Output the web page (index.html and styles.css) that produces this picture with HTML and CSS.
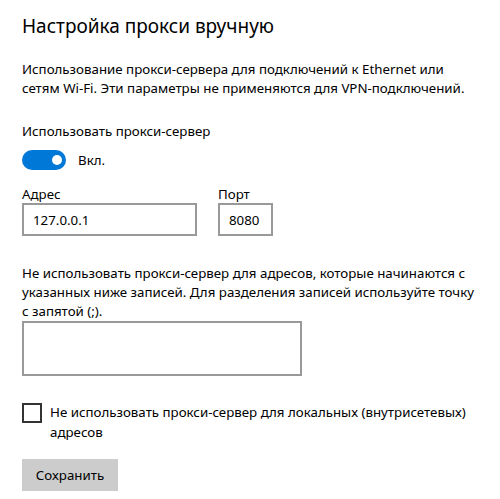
FILE: index.html
```html
<!DOCTYPE html>
<html lang="ru">
<head>
<meta charset="utf-8">
<title>Настройка прокси вручную</title>
<link rel="stylesheet" href="styles.css">
</head>
<body>
<main class="page">
  <h1 class="title">Настройка прокси вручную</h1>
  <p class="desc">Использование прокси-сервера для подключений к Ethernet или сетям Wi-Fi. Эти параметры не применяются для VPN-подключений.</p>
  <div class="label use-label">Использовать прокси-сервер</div>
  <div class="toggle-row">
    <span class="toggle"><span class="knob"></span></span>
    <span class="toggle-text">Вкл.</span>
  </div>
  <div class="fields">
    <div class="field">
      <div class="field-label">Адрес</div>
      <div class="input addr">127.0.0.1</div>
    </div>
    <div class="field">
      <div class="field-label">Порт</div>
      <div class="input port">8080</div>
    </div>
  </div>
  <p class="desc desc2">Не использовать прокси-сервер для адресов, которые начинаются с указанных ниже записей. Для разделения записей используйте точку с запятой (;).</p>
  <div class="textarea"></div>
  <div class="check-row">
    <span class="checkbox"></span>
    <span class="check-text">Не использовать прокси-сервер для локальных (внутрисетевых) адресов</span>
  </div>
  <button class="save">Сохранить</button>
</main>
</body>
</html>
```
FILE: styles.css
```css
html, body {
  margin: 0;
  padding: 0;
  background: #ffffff;
}
body {
  font-family: "Noto Sans", "Open Sans", sans-serif;
  font-size: 13.3px;
  color: #000;
}
.page {
  padding: 12px 22px 0 22px;
  display: flex;
  flex-direction: column;
  align-items: flex-start;
}
.title {
  margin: 0;
  font-size: 19px;
  font-weight: 400;
  line-height: 28px;
}
.desc {
  margin: 20px 0 0 0;
  line-height: 19px;
  width: 450px;
}
.label {
  line-height: 19px;
}
.use-label {
  margin-top: 24px;
}
.toggle-row {
  display: flex;
  align-items: center;
  margin-top: 9px;
  height: 20px;
}
.toggle {
  width: 44px;
  height: 20px;
  border-radius: 10px;
  background: #0078d7;
  display: flex;
  align-items: center;
  justify-content: flex-end;
  padding-right: 4px;
  box-sizing: border-box;
}
.knob {
  width: 10px;
  height: 10px;
  border-radius: 50%;
  background: #fff;
}
.toggle-text {
  margin-left: 12px;
}
.fields {
  display: flex;
  gap: 21px;
  margin-top: 16px;
}
.field {
  display: flex;
  flex-direction: column;
}
.field-label {
  line-height: 17px;
}
.input {
  box-sizing: border-box;
  height: 33px;
  border: 2px solid #999;
  padding: 0 9px;
  display: flex;
  align-items: center;
}
.addr { width: 175px; }
.port { width: 55px; }
.desc2 {
  margin-top: 28px;
  width: 458px;
}
.textarea {
  box-sizing: border-box;
  width: 280px;
  height: 55px;
  border: 2px solid #999;
  margin-top: 0;
}
.check-row {
  display: flex;
  align-items: flex-start;
  margin-top: 26px;
}
.checkbox {
  box-sizing: border-box;
  width: 20px;
  height: 20px;
  border: 2px solid #333;
  flex: none;
  margin-top: 1px;
}
.check-text {
  margin-left: 8px;
  line-height: 20px;
  width: 430px;
}
.save {
  margin-top: 17px;
  background: #cccccc;
  border: none;
  font: inherit;
  color: #000;
  height: 32px;
  width: 96px;
  padding: 0;
}
```
